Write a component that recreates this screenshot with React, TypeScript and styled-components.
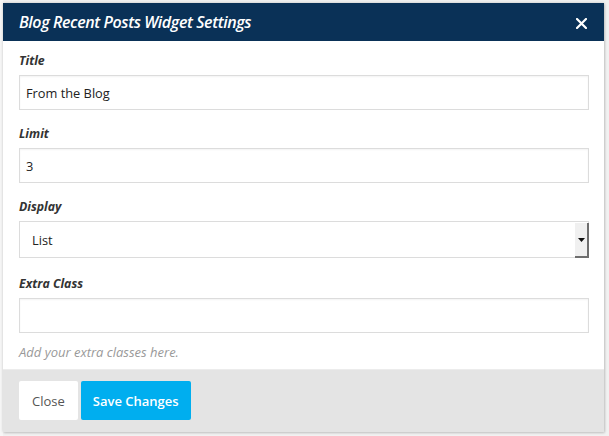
import styled, { createGlobalStyle } from "styled-components"

const GlobalStyle = createGlobalStyle`
    html, body {
        margin: 0;
        padding: 0;
        background: #f1f1f1;
        font-family: "Open Sans", "Liberation Sans", sans-serif;
    }
    * {
        box-sizing: border-box;
    }
`

const fields = [
    { label: "Title", value: "From the Blog" },
    { label: "Limit", value: "3" },
]

export default function App() {
    return (
        <>
            <GlobalStyle />
            <Page>
                <Modal>
                    <Header>
                        <HeaderTitle>Blog Recent Posts Widget Settings</HeaderTitle>
                        <CloseIcon aria-label="Close">
                            <svg width="11" height="11" viewBox="0 0 11 11">
                                <path d="M1 1 L10 10 M10 1 L1 10" stroke="#fff" strokeWidth="2.2" strokeLinecap="round" />
                            </svg>
                        </CloseIcon>
                    </Header>
                    <Body>
                        {fields.map(field => (
                            <Field key={field.label}>
                                <Label>{field.label}</Label>
                                <Input defaultValue={field.value} />
                            </Field>
                        ))}
                        <Field spaced>
                            <Label>Display</Label>
                            <SelectWrap>
                                <Select defaultValue="list">
                                    <option value="list">List</option>
                                    <option value="grid">Grid</option>
                                </Select>
                                <SelectArrow>
                                    <svg width="7" height="4" viewBox="0 0 7 4">
                                        <path d="M0 0 H7 L3.5 4 Z" fill="#111" />
                                    </svg>
                                </SelectArrow>
                            </SelectWrap>
                        </Field>
                        <Field last>
                            <Label>Extra Class</Label>
                            <Input defaultValue="" />
                            <Help>Add your extra classes here.</Help>
                        </Field>
                    </Body>
                    <Footer>
                        <Button>Close</Button>
                        <Button primary>Save Changes</Button>
                    </Footer>
                </Modal>
            </Page>
        </>
    )
}

const Page = styled.div`
    width: 609px;
    height: 436px;
    padding: 3px 5px 4px 3px;
    background: linear-gradient(to right, #f7f7f7 0, #f7f7f7 3px, #f1f1f1 3px);
`

const Modal = styled.div`
    width: 601px;
    background: #fff;
    box-shadow: 0 0 3px rgba(0, 0, 0, 0.18), 1px 1px 2px rgba(0, 0, 0, 0.12);
    display: flex;
    flex-direction: column;
`

const Header = styled.div`
    height: 38px;
    background: #0a3157;
    display: flex;
    align-items: center;
    justify-content: space-between;
    padding: 0 17px 0 16px;
`

const HeaderTitle = styled.h1`
    margin: 0;
    color: #fff;
    font-size: 16px;
    font-weight: 600;
    font-style: italic;
    letter-spacing: -0.4px;
`

const CloseIcon = styled.span`
    display: flex;
    align-items: center;
    margin-top: 2px;
`

const Body = styled.div`
    padding: 10px 15px 8px 16px;
    display: flex;
    flex-direction: column;
`

const Field = styled.div<{ spaced?: boolean, last?: boolean }>`
    display: flex;
    flex-direction: column;
    margin-bottom: ${props => props.last ? 0 : props.spaced ? 16 : 14}px;
`

const Label = styled.label`
    font-size: 12.3px;
    line-height: 20px;
    font-weight: 700;
    font-style: italic;
    color: #333;
    margin-bottom: 4px;
`

const Input = styled.input`
    height: 35px;
    width: 100%;
    border: 1px solid #dcdcdc;
    box-shadow: inset 0 1px 2px rgba(0, 0, 0, 0.05);
    padding: 0 6px;
    font-family: "Open Sans", "Liberation Sans", sans-serif;
    font-size: 12.8px;
    color: #222;
    outline: none;
`

const SelectWrap = styled.div`
    position: relative;
`

const Select = styled.select`
    appearance: none;
    height: 37px;
    width: 100%;
    border: 1px solid #dcdcdc;
    border-radius: 0;
    background: #fff;
    padding: 0 12px;
    font-family: "Open Sans", "Liberation Sans", sans-serif;
    font-size: 12.8px;
    color: #222;
    outline: none;
`

const SelectArrow = styled.span`
    position: absolute;
    top: 2px;
    right: 0;
    width: 14px;
    height: 35px;
    background: #f0f0f0;
    border-right: 2px solid #6e6e6e;
    border-bottom: 2px solid #6e6e6e;
    display: flex;
    align-items: center;
    justify-content: center;
    pointer-events: none;
`

const Help = styled.p`
    margin: 10px 0 0;
    font-size: 13px;
    line-height: 18px;
    font-style: italic;
    color: #999;
`

const Footer = styled.div`
    background: #e4e4e4;
    border-top: 1px solid #ececec;
    padding: 11px 16px 12px;
    display: flex;
    gap: 3px;
`

const Button = styled.button<{ primary?: boolean }>`
    height: 39px;
    padding: 0 ${props => props.primary ? 12 : 13}px;
    border: none;
    border-radius: 2px;
    font-family: "Open Sans", "Liberation Sans", sans-serif;
    font-size: 13px;
    font-weight: ${props => props.primary ? 600 : 400};
    color: ${props => props.primary ? "#fff" : "#555"};
    background: ${props => props.primary ? "#00aeef" : "#fff"};
    cursor: pointer;
`
